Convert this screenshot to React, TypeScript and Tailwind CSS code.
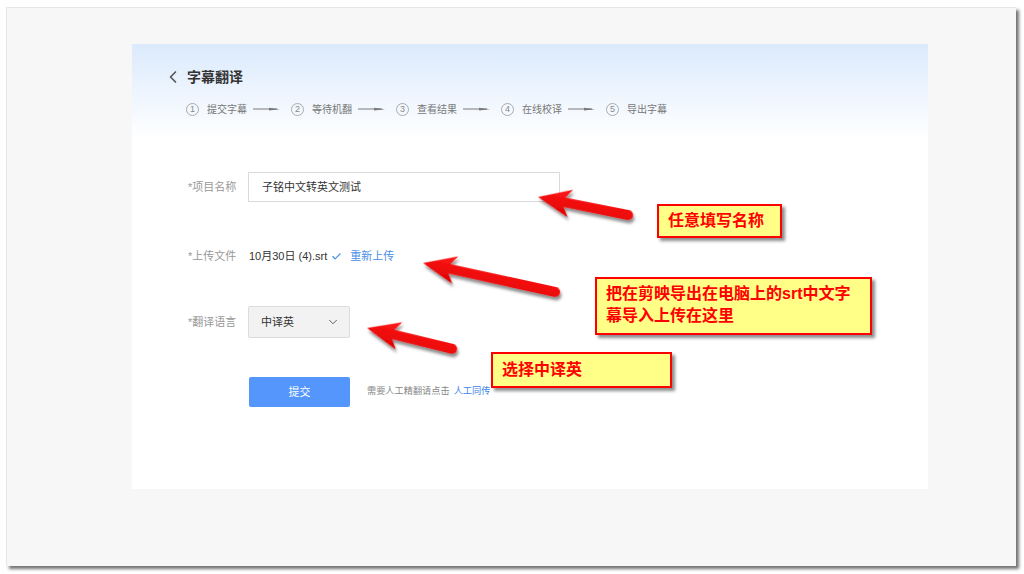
import { Check, ChevronDown, ChevronLeft } from "lucide-react";

const steps = ["提交字幕", "等待机翻", "查看结果", "在线校译", "导出字幕"];

function StepArrow() {
  return (
    <svg width="27" height="6" viewBox="0 0 27 6" className="ml-[6px] mr-[11px]">
      <line x1="0" y1="3" x2="24" y2="3" stroke="#7a7a7a" strokeWidth="1" />
      <polygon points="16,1.8 27,3.2 16,4.4" fill="#7a7a7a" />
    </svg>
  );
}

// red annotation arrow, tip at (x,y), tail at (tx,ty)
function RedArrow({ x, y, tx, ty }: { x: number; y: number; tx: number; ty: number }) {
  const dx = tx - x;
  const dy = ty - y;
  const len = Math.sqrt(dx * dx + dy * dy);
  const angle = (Math.atan2(dy, dx) * 180) / Math.PI;
  const d = `M0,0 L33,-14 L27,-4.8 L${len - 5},-5 A5,5 0 0 1 ${len - 5},5 L27,4.8 L33,14 Z`;
  return (
    <g transform={`translate(${x},${y}) rotate(${angle})`} filter="url(#arrowShadow)">
      <path d={d} fill="url(#arrowRed)" />
    </g>
  );
}

export default function App() {
  return (
    <div className="relative w-[1024px] h-[574px] bg-white pl-[6px] pt-[7px] overflow-hidden font-['Liberation_Sans','Noto_Sans_CJK_SC',sans-serif]">
      <div className="w-[1010px] h-[559px] bg-[#f7f7f7] border-l border-t border-[#e6e6e6] shadow-[3px_3px_3px_rgba(0,0,0,0.55)] pl-[125px] pt-[36px]">
        <div className="w-[796px] h-[445px] bg-white">
          {/* header */}
          <div className="h-[95px] bg-gradient-to-b from-[#dbeafc] to-white pl-[31px] pt-[23px]">
            <div className="flex items-center h-[20px]">
              <ChevronLeft size={20} strokeWidth={2} className="text-[#555]" />
              <span className="ml-[4px] text-[14px] font-bold text-[#333]">字幕翻译</span>
            </div>
            <div className="flex items-center h-[16px] mt-[14px] ml-[23px]">
              {steps.map((s, i) => (
                <div key={s} className="flex items-center">
                  <span className="flex items-center justify-center w-[13px] h-[13px] rounded-full border border-[#aaa] text-[9px] leading-none text-[#888]">
                    {i + 1}
                  </span>
                  <span className="ml-[8px] text-[10px] text-[#777]">{s}</span>
                  {i < steps.length - 1 && <StepArrow />}
                </div>
              ))}
            </div>
          </div>

          {/* form */}
          <div className="pt-[33px] pl-[56px]">
            <div className="flex items-center h-[30px]">
              <span className="w-[60px] text-[11px] text-[#999]">*项目名称</span>
              <div className="w-[312px] h-[30px] border border-[#d9d9d9] flex items-center pl-[13px] text-[11px] text-[#333]">
                子铭中文转英文测试
              </div>
            </div>

            <div className="flex items-center h-[20px] mt-[44px]">
              <span className="w-[61px] text-[11px] text-[#999]">*上传文件</span>
              <span className="text-[11px] text-[#333]">10月30日 (4).srt</span>
              <Check size={11} strokeWidth={2.5} className="ml-[4px] text-[#4a8fe7]" />
              <span className="ml-[8px] text-[11px] text-[#4a8fe7]">重新上传</span>
            </div>

            <div className="flex items-center h-[32px] mt-[40px]">
              <span className="w-[60px] text-[11px] text-[#999]">*翻译语言</span>
              <div className="w-[102px] h-[32px] bg-[#f2f2f2] border border-[#dcdcdc] rounded-[2px] flex items-center justify-between pl-[12px] pr-[9px] text-[11px] text-[#333]">
                <span>中译英</span>
                <ChevronDown size={14} strokeWidth={1.6} className="text-[#555]" />
              </div>
            </div>

            <div className="flex items-center h-[30px] mt-[39px] ml-[61px]">
              <div className="w-[101px] h-[30px] bg-[#5496fc] rounded-[2px] flex items-center justify-center text-[11px] text-white">
                提交
              </div>
              <span className="ml-[17px] text-[9.2px] text-[#888]">需要人工精翻请点击</span>
              <span className="ml-[4px] text-[9.2px] text-[#3d84e6]">人工同传</span>
            </div>
          </div>
        </div>
      </div>

      {/* annotations */}
      <svg className="absolute left-0 top-0" width="1024" height="574">
        <defs>
          <linearGradient id="arrowRed" x1="0" y1="0" x2="0" y2="1">
            <stop offset="0" stopColor="#ff1a1a" />
            <stop offset="1" stopColor="#e00000" />
          </linearGradient>
          <filter id="arrowShadow" x="-20%" y="-50%" width="140%" height="200%">
            <feDropShadow dx="2" dy="3" stdDeviation="1.5" floodColor="#000" floodOpacity="0.45" />
          </filter>
        </defs>
        <RedArrow x={538} y={197} tx={633} ty={216} />
        <RedArrow x={423} y={263} tx={560} ty={293} />
        <RedArrow x={367} y={328} tx={457} ty={350} />
      </svg>

      <div className="absolute left-[657px] top-[204px] w-[125px] h-[34px] bg-[#ffff88] border-2 border-[#ff0000] shadow-[3px_3px_3px_rgba(0,0,0,0.45)] flex items-center pl-[9px] text-[16px] font-bold text-[#ff0000]">
        任意填写名称
      </div>
      <div className="absolute left-[595px] top-[277px] w-[277px] h-[58px] bg-[#ffff88] border-2 border-[#ff0000] shadow-[3px_3px_3px_rgba(0,0,0,0.45)] pl-[9px] pt-[4px] text-[16px] leading-[22px] font-bold text-[#ff0000]">
        把在剪映导出在电脑上的srt中文字
        <br />
        幕导入上传在这里
      </div>
      <div className="absolute left-[491px] top-[352px] w-[181px] h-[36px] bg-[#ffff88] border-2 border-[#ff0000] shadow-[3px_3px_3px_rgba(0,0,0,0.45)] flex items-center pl-[9px] text-[16px] font-bold text-[#ff0000]">
        选择中译英
      </div>
    </div>
  );
}
